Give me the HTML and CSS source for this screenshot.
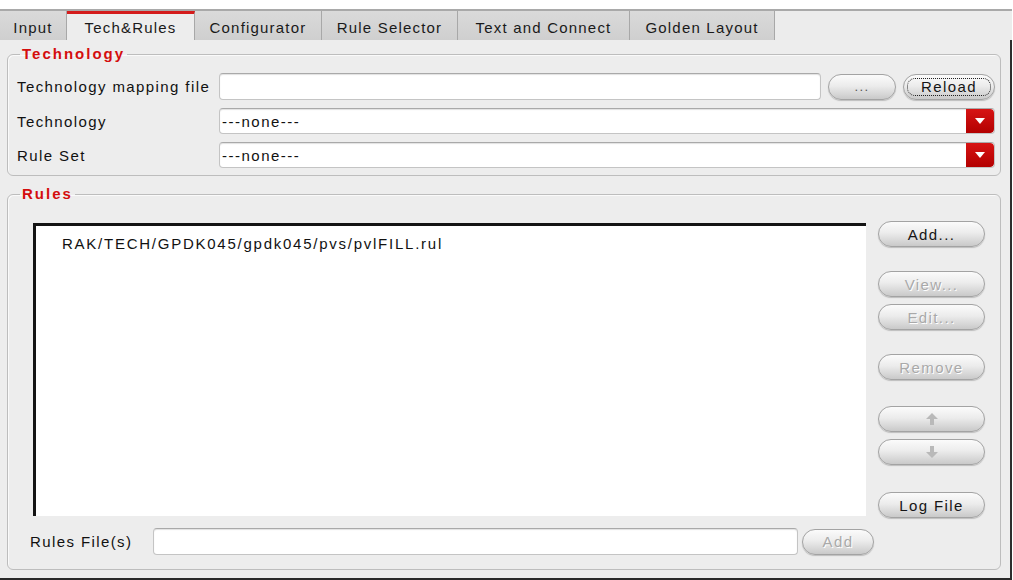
FILE: index.html
```html
<!DOCTYPE html>
<html>
<head>
<meta charset="utf-8">
<title>Tech&amp;Rules</title>
<link rel="stylesheet" href="styles.css">
</head>
<body>
<div class="window">
  <div class="tabbar">
    <div class="tab w-input">Input</div>
    <div class="tab active w-tech">Tech&amp;Rules</div>
    <div class="tab w-conf">Configurator</div>
    <div class="tab w-rule">Rule Selector</div>
    <div class="tab w-text">Text and Connect</div>
    <div class="tab w-gold">Golden Layout</div>
  </div>
  <div class="page">
    <fieldset class="group tech">
      <legend>Technology</legend>
      <div class="row r-map">
        <span class="label">Technology mapping file</span>
        <div class="cell">
          <div class="field grow"></div>
          <div class="btn b-dots">...</div>
          <div class="btn b-reload"><span class="focus">Reload</span></div>
        </div>
      </div>
      <div class="row">
        <span class="label">Technology</span>
        <div class="combo"><span class="combo-text">---none---</span><span class="combo-btn"><svg width="12" height="8" viewBox="0 0 12 8"><path d="M1 1h10L6 7z" fill="#fff"/></svg></span></div>
      </div>
      <div class="row">
        <span class="label">Rule Set</span>
        <div class="combo"><span class="combo-text">---none---</span><span class="combo-btn"><svg width="12" height="8" viewBox="0 0 12 8"><path d="M1 1h10L6 7z" fill="#fff"/></svg></span></div>
      </div>
    </fieldset>

    <fieldset class="group rules">
      <legend>Rules</legend>
      <div class="rules-main">
        <div class="list">
          <div class="list-item">RAK/TECH/GPDK045/gpdk045/pvs/pvlFILL.rul</div>
        </div>
        <div class="side">
          <div class="btn sb s-add">Add...</div>
          <div class="btn sb dis s-view">View...</div>
          <div class="btn sb dis s-edit">Edit...</div>
          <div class="btn sb dis s-remove">Remove</div>
          <div class="btn sb dis s-up"><svg width="14" height="14" viewBox="0 0 14 14"><path d="M7 1L1 7h4v6h4V7h4z" fill="#b9b9b9"/></svg></div>
          <div class="btn sb dis s-down"><svg width="14" height="14" viewBox="0 0 14 14"><path d="M7 13L1 7h4V1h4v6h4z" fill="#b9b9b9"/></svg></div>
          <div class="btn sb s-log">Log File</div>
        </div>
      </div>
      <div class="rules-bottom">
        <span class="label rf-label">Rules File(s)</span>
        <div class="field rf-field"></div>
        <div class="btn dis b-add2">Add</div>
      </div>
    </fieldset>
  </div>
</div>
</body>
</html>
```

FILE: styles.css
```css
* { box-sizing: border-box; }
html, body { margin: 0; padding: 0; background: #fff; }
body {
  font-family: "Liberation Sans", Arial, sans-serif;
  font-size: 15px;
  letter-spacing: 1.4px;
  color: #111;
  width: 1013px;
  height: 580px;
  overflow: hidden;
}
.window {
  margin-top: 9px;
  width: 1012px;
}
.tabbar {
  display: flex;
  height: 31px;
  border-top: 2px solid #a9a9a9;
  background: #ececec;
}
.tab {
  height: 29px;
  display: flex;
  align-items: center;
  justify-content: center;
  background: linear-gradient(#dadada, #cfcfcf);
  border-right: 1px solid #a8a8a8;
  color: #1a1a1a;
  padding-top: 3px;
  letter-spacing: 1.2px;
}
.tab.active {
  background: #ededed;
  border-top: 3px solid #d41c1c;
  padding-top: 0;
}
.w-input { width: 67px; }
.w-tech { width: 128px; }
.w-conf { width: 127px; }
.w-rule { width: 136px; }
.w-text { width: 172px; }
.w-gold { width: 145px; }

.page {
  background: #ededed;
  height: 540px;
  border-right: 2px solid #2e2e2e;
  border-bottom: 2px solid #2a2a2a;
  padding: 5px 9px 0 7px;
}
.group {
  margin: 0;
  border: 1px solid #bdbdbd;
  border-radius: 6px;
  box-shadow: inset 1px 1px 0 #fafafa;
}
.group legend {
  color: #d40e0e;
  font-weight: bold;
  letter-spacing: 2px;
  padding: 0 2px;
  line-height: 18px;
  font-size: 15px;
}
.tech legend { margin-left: 3px; }
.rules legend { margin-left: -13px; }
.tech {
  padding: 10px 5px 7px 9px;
}
.row {
  display: grid;
  grid-template-columns: 202px 1fr;
  align-items: center;
  margin-bottom: 8px;
}
.row:last-child { margin-bottom: 0; }
.cell {
  display: flex;
  align-items: center;
  gap: 7px;
}
.grow { flex: 1; }
.field {
  height: 27px;
  background: #fff;
  border: 1px solid #c4c4c4;
  border-top-color: #a9a9a9;
  border-radius: 4px;
  box-shadow: inset 0 1px 1px #e2e2e2;
}
.btn {
  height: 26px;
  border-radius: 13px;
  border: 1px solid #a3a3a3;
  background: linear-gradient(#fbfbfb 0%, #ececec 45%, #d6d6d6 80%, #c9c9c9 100%);
  box-shadow: 0 1px 1px #bdbdbd;
  display: flex;
  align-items: center;
  justify-content: center;
  color: #151515;
}
.b-dots { width: 68px; color: #555; font-size: 13px; }
.b-reload { width: 92px; padding: 3px; }
.focus {
  border: 1px dotted #222;
  border-radius: 8px;
  width: 100%;
  height: 100%;
  display: flex;
  align-items: center;
  justify-content: center;
}
.combo {
  height: 26px;
  display: flex;
  background: #fff;
  border: 1px solid #c4c4c4;
  border-top-color: #a9a9a9;
  border-radius: 4px;
  box-shadow: inset 0 1px 1px #e2e2e2;
  overflow: hidden;
}
.combo-text {
  flex: 1;
  display: flex;
  align-items: center;
  padding-left: 2px;
  letter-spacing: 1.5px;
}
.combo-btn {
  width: 28px;
  background: linear-gradient(#d71414, #b30000);
  border-radius: 0 4px 4px 0;
  display: flex;
  align-items: center;
  justify-content: center;
}

.rules {
  margin-top: 9px;
  padding: 20px 15px 12px 25px;
  height: 385px;
}
.rules-main {
  display: flex;
  gap: 12px;
  height: 293px;
}
.list {
  flex: 1;
  background: #fff;
  border-top: 3px solid #141414;
  border-left: 3px solid #141414;
  padding: 9px 0 0 26px;
}
.list-item { letter-spacing: 1.75px; }
.side {
  width: 107px;
  display: flex;
  flex-direction: column;
  margin-top: -2px;
}
.sb { height: 26px; flex: none; }
.s-view { margin-top: 24px; }
.s-edit { margin-top: 7px; }
.s-remove { margin-top: 24px; }
.s-up { margin-top: 26px; }
.s-down { margin-top: 7px; }
.s-log { margin-top: 27px; }
.dis {
  color: #a9a9a9;
  text-shadow: 1px 1px 0 #fff;
}
.rules-bottom {
  display: flex;
  align-items: center;
  margin-top: 12px;
  margin-left: -3px;
}
.rf-label { width: 123px; }
.rf-field { width: 645px; }
.b-add2 { width: 72px; margin-left: 4px; }
```
